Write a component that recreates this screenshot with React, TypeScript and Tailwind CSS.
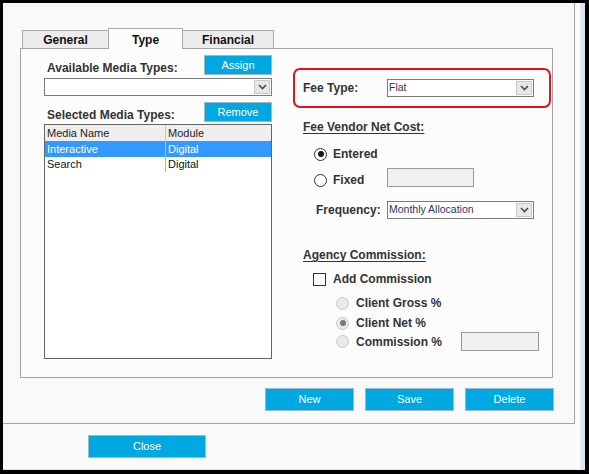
import type { ReactNode } from 'react';

const FONT = "font-['Liberation_Sans',Arial,sans-serif]";
const LABEL = 'text-[12px] font-bold text-[#333]';

const Chevron = () => (
   <svg width="9" height="6" viewBox="0 0 9 6">
      <path d="M1 1l3.5 3.5L8 1" fill="none" stroke="#4a4a4a" strokeWidth="1.6" />
   </svg>
);

const ComboBox = ({ value = '', width }: { value?: string; width: string }) => (
   <div className={`flex h-[18px] border border-[#7a7a7a] bg-white ${width}`}>
      <span className="flex-1 truncate pl-[1px] text-[10.5px] leading-[15px] text-[#2e3463]">
         {value}
      </span>
      <span className="m-px flex w-[16px] items-center justify-center border border-[#c9c9c9] bg-[#e8e8e8]">
         <Chevron />
      </span>
   </div>
);

const Radio = ({ checked, disabled }: { checked?: boolean; disabled?: boolean }) => (
   <span
      className={`flex h-[13px] w-[13px] shrink-0 items-center justify-center rounded-full border ${
         disabled ? 'border-[#c8c8c8] bg-[#e9e9e9]' : 'border-[#333] bg-white'
      }`}
   >
      {checked && (
         <span
            className={`h-[6px] w-[6px] rounded-full ${disabled ? 'bg-[#777]' : 'bg-[#1a1a1a]'}`}
         />
      )}
   </span>
);

const BlueButton = ({ children, className }: { children: ReactNode; className: string }) => (
   <button
      className={`flex items-center justify-center border border-[#9fb8c6] bg-[#00a8e1] text-[11px] text-white ${className}`}
   >
      {children}
   </button>
);

const TextBox = ({ width }: { width: string }) => (
   <div className={`h-[19px] border border-[#9a9a9a] bg-[#f0f0f0] ${width}`} />
);

export default function App() {
   return (
      <div className={`flex h-[474px] w-[589px] bg-black pb-[4px] pl-[3px] pr-[4px] pt-[3px] ${FONT}`}>
         {/* main window area */}
         <div className="flex w-[574px] flex-col border-b border-[#d6e2ef] bg-[#f9f9f9]">
            {/* group box */}
            <div className="h-[421px] w-[572px] border-b border-r border-[#a3a3a3] pl-[17px] pt-[25px]">
               {/* tab strip */}
               <div className="relative z-10 flex h-[20px] items-end pl-[2px]">
                  <div className="flex h-[18px] w-[86px] items-center justify-center border-l border-t border-[#acacac] bg-[#ececec] text-[12px] font-bold text-[#111]">
                     General
                  </div>
                  <div className="-mb-px flex h-[21px] w-[75px] items-start justify-center border-x border-t border-[#acacac] bg-[#fcfcfc] pt-[2px] text-[12px] font-bold text-[#111]">
                     Type
                  </div>
                  <div className="flex h-[18px] w-[91px] items-center justify-center border-r border-t border-[#acacac] bg-[#ececec] text-[12px] font-bold text-[#111]">
                     Financial
                  </div>
               </div>

               {/* tab panel */}
               <div className="flex h-[330px] w-[533px] border border-[#a3a3a3] bg-[#fcfcfc]">
                  {/* left column */}
                  <div className="ml-[23px] mt-[6px] w-[228px]">
                     <div className="flex h-[20px] items-end justify-between">
                        <span className={`ml-[3px] leading-[14px] ${LABEL}`}>Available Media Types:</span>
                        <BlueButton className="h-[20px] w-[68px]">Assign</BlueButton>
                     </div>
                     <div className="mt-[3px]">
                        <ComboBox width="w-[228px]" />
                     </div>
                     <div className="mt-[6px] flex h-[20px] items-end justify-between">
                        <span className={`ml-[3px] leading-[14px] ${LABEL}`}>Selected Media Types:</span>
                        <BlueButton className="h-[20px] w-[68px]">Remove</BlueButton>
                     </div>
                     <div className="mt-[2px] h-[235px] border border-[#646464] bg-white text-[11px]">
                        <div className="flex h-[16px] bg-[#efefef] leading-[16px] text-[#1e1e1e]">
                           <div className="w-[121px] border-r border-[#c4c4c4] pl-[2px]">Media Name</div>
                           <div className="pl-[2px]">Module</div>
                        </div>
                        <div className="flex h-[16px] bg-[#3399ff] leading-[16px] text-white">
                           <div className="w-[121px] border-r border-[#9cc7f2] pl-[2px]">Interactive</div>
                           <div className="pl-[2px]">Digital</div>
                        </div>
                        <div className="flex h-[15px] leading-[15px] text-[#111]">
                           <div className="w-[121px] border-r border-[#b4b4b4] pl-[2px]">Search</div>
                           <div className="pl-[2px]">Digital</div>
                        </div>
                     </div>
                  </div>

                  {/* right column */}
                  <div className="ml-[21px] mt-[19px] flex w-[258px] flex-col">
                     <div className="flex h-[40px] items-center rounded-[7px] border-2 border-[#e3121b] pl-[8px]">
                        <span className={`w-[84px] ${LABEL}`}>Fee Type:</span>
                        <ComboBox value="Flat" width="w-[147px]" />
                     </div>

                     <div className={`ml-[10px] mt-[12px] leading-[14px] underline underline-offset-2 ${LABEL}`}>
                        Fee Vendor Net Cost:
                     </div>

                     <div className="ml-[21px] mt-[13px] flex h-[14px] items-center gap-[6px]">
                        <Radio checked />
                        <span className={LABEL}>Entered</span>
                     </div>

                     <div className="ml-[21px] mt-[7px] flex h-[19px] items-end">
                        <Radio />
                        <span className={`ml-[6px] w-[54px] leading-[14px] ${LABEL}`}>Fixed</span>
                        <TextBox width="w-[87px]" />
                     </div>

                     <div className="ml-[23px] mt-[14px] flex h-[18px] items-center">
                        <span className={`w-[71px] ${LABEL}`}>Frequency:</span>
                        <ComboBox value="Monthly Allocation" width="w-[147px]" />
                     </div>

                     <div className={`ml-[10px] mt-[29px] leading-[14px] underline underline-offset-2 ${LABEL}`}>
                        Agency Commission:
                     </div>

                     <div className="ml-[20px] mt-[10px] flex h-[14px] items-center gap-[7px]">
                        <span className="h-[13px] w-[13px] border border-[#333] bg-white" />
                        <span className={LABEL}>Add Commission</span>
                     </div>

                     <div className="ml-[43px] mt-[10px] flex h-[14px] items-center gap-[7px]">
                        <Radio disabled />
                        <span className={LABEL}>Client Gross %</span>
                     </div>
                     <div className="ml-[43px] mt-[6px] flex h-[14px] items-center gap-[7px]">
                        <Radio disabled checked />
                        <span className={LABEL}>Client Net %</span>
                     </div>
                     <div className="ml-[43px] mt-[2px] flex h-[19px] items-center">
                        <Radio disabled />
                        <span className={`ml-[7px] w-[105px] ${LABEL}`}>Commission %</span>
                        <TextBox width="w-[78px]" />
                     </div>
                  </div>
               </div>

               {/* action buttons */}
               <div className="mt-[10px] flex gap-[11px] pl-[245px]">
                  <BlueButton className="h-[23px] w-[89px]">New</BlueButton>
                  <BlueButton className="h-[23px] w-[89px]">Save</BlueButton>
                  <BlueButton className="h-[23px] w-[89px]">Delete</BlueButton>
               </div>
            </div>

            {/* footer */}
            <div className="flex-1 pl-[85px] pt-[11px]">
               <BlueButton className="h-[23px] w-[118px]">Close</BlueButton>
            </div>
         </div>

         {/* window frame */}
         <div className="w-[3px] bg-[#fbfbfb]" />
         <div className="flex-1 border-l border-[#e6edf6] bg-[#d8e4f2]" />
      </div>
   );
}
